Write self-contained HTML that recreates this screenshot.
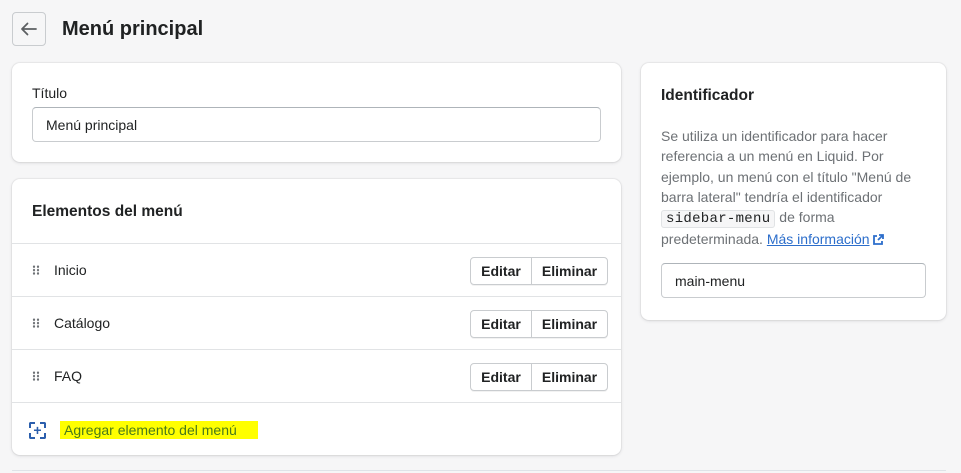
<!DOCTYPE html>
<html><head><meta charset="utf-8"><style>
*{box-sizing:border-box;margin:0;padding:0}
body{width:961px;height:473px;background:#f6f6f7;font-family:"Liberation Sans",sans-serif;color:#202223;position:relative;overflow:hidden;font-size:14px}
.abs{position:absolute}
.card{position:absolute;background:#fff;border-radius:8px;box-shadow:0 0 0 1px rgba(63,63,68,.05),0 1px 3px rgba(63,63,68,.15)}
.back{left:12px;top:12px;width:34px;height:34px;border:1px solid #c9cccf;border-radius:4px;background:#f6f6f7}
h1{position:absolute;left:62px;top:18px;font-size:20px;font-weight:600;color:#202223}
.input{position:absolute;border:1px solid #c9cccf;border-top-color:#aeb4b9;border-radius:4px;background:#fff;padding-left:13px;display:flex;align-items:center;font-size:14px}
.row{position:absolute;left:0;width:609px;height:53px;border-top:1px solid #e1e3e5}
.row .lbl{position:absolute;left:42px;top:18px}
.dots{position:absolute;left:20px;top:21px;width:8px;height:10px;background-image:radial-gradient(circle,#6d7175 1.1px,transparent 1.3px);background-size:4px 3.4px}
.btns{position:absolute;left:458px;top:13px;display:flex;height:28px;border:1px solid #c9cccf;border-radius:4px;box-shadow:0 1px 0 rgba(0,0,0,.05)}
.btns div{display:flex;align-items:center;justify-content:center;font-size:14px;font-weight:600;color:#202223}
.b1{width:61px;border-right:1px solid #c9cccf}.b2{width:75px}
.p{font-size:14px;line-height:20.3px;color:#6d7175}
code{font-family:"Liberation Mono",monospace;font-size:14px;color:#202223;background:#f6f6f7;border:1px solid #e1e3e5;border-radius:3px;padding:0 4px;letter-spacing:.3px}
a{color:#2c6ecb;text-decoration:underline}
</style></head><body>
<div class="back abs"><svg width="34" height="34" viewBox="0 0 34 34" style="position:absolute;left:-1px;top:-1px"><path d="M24 17H10M15.5 11.5L10 17l5.5 5.5" stroke="#5c5f62" stroke-width="1.8" fill="none" stroke-linecap="round" stroke-linejoin="round"/></svg></div>
<h1>Menú principal</h1>

<div class="card" style="left:12px;top:63px;width:609px;height:99px">
  <div class="abs" style="left:20px;top:22px">Título</div>
  <div class="input" style="left:20px;top:44px;width:569px;height:35px">Menú principal</div>
</div>

<div class="card" style="left:12px;top:179px;width:609px;height:276px">
  <div class="abs" style="left:20px;top:24px;font-size:15.5px;font-weight:600">Elementos del menú</div>
  <div class="row" style="top:64px"><div class="dots"></div><div class="lbl">Inicio</div><div class="btns"><div class="b1">Editar</div><div class="b2">Eliminar</div></div></div>
  <div class="row" style="top:117px"><div class="dots"></div><div class="lbl">Catálogo</div><div class="btns"><div class="b1">Editar</div><div class="b2">Eliminar</div></div></div>
  <div class="row" style="top:170px"><div class="dots"></div><div class="lbl">FAQ</div><div class="btns"><div class="b1">Editar</div><div class="b2">Eliminar</div></div></div>
  <div class="row" style="top:223px;height:53px">
    <div class="abs" style="left:17px;top:19px;width:17px;height:17px;border:2px dashed #2c5fad;border-radius:2px"></div>
    <div class="abs" style="left:21px;top:18px;width:9px;font-size:14px;font-weight:700;color:#2c5fad;text-align:center;line-height:19px">+</div>
    <div class="abs" style="left:48px;top:18px;width:198px;height:18px;background:#ffff00"></div>
    <div class="abs" style="left:52px;top:19px;color:#4a7a19;font-size:14px">Agregar elemento del menú</div>
  </div>
</div>

<div class="card" style="left:641px;top:63px;width:305px;height:257px">
  <div class="abs" style="left:20px;top:24px;font-size:15.5px;font-weight:600">Identificador</div>
  <div class="abs p" style="left:20px;top:63px;width:270px">Se utiliza un identificador para hacer referencia a un menú en Liquid. Por ejemplo, un menú con el título "Menú de barra lateral" tendría el identificador <code>sidebar-menu</code> de forma predeterminada. <a>Más información</a> <svg width="11" height="11" viewBox="0 0 11 11" style="vertical-align:-1px"><path d="M6 1h4v4M10 1L5 6M4 2H1v8h8V7" stroke="#2c6ecb" stroke-width="1.8" fill="none"/></svg></div>
  <div class="input" style="left:20px;top:200px;width:265px;height:35px">main-menu</div>
</div>

<div class="abs" style="left:12px;top:470px;width:934px;height:1px;background:#dfe3e8"></div>
</body></html>
